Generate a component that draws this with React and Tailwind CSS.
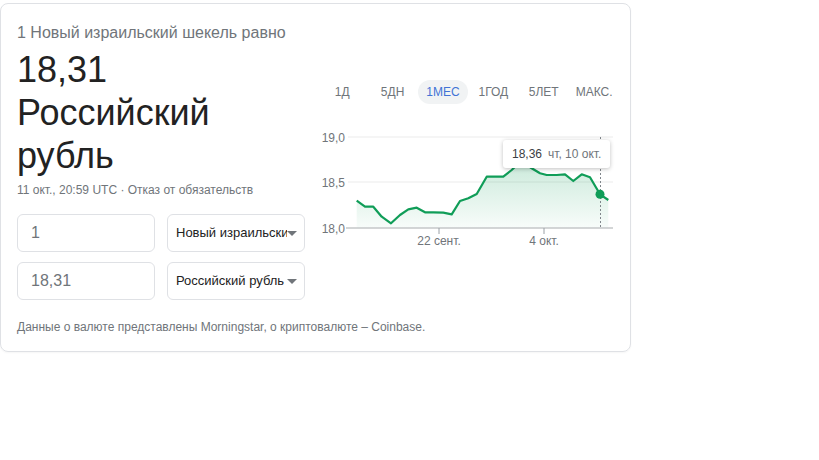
import React from "react";

const pts = [
  [41.7, 75.7], [50, 81.7], [58.3, 81.7], [66.7, 91.7], [76, 98.3], [85, 90],
  [93.3, 84.3], [101.7, 82.7], [110, 87.3], [118.3, 87.3], [128.3, 87.7],
  [136.7, 89.3], [145, 76], [153.3, 73.3], [161.7, 69], [171.7, 51.7],
  [180, 51.7], [188.3, 51.7], [196.7, 45], [206, 36], [216.7, 43.3],
  [225, 48.3], [231.7, 50], [241.7, 50], [250, 49.3], [258.3, 56],
  [266.7, 49.3], [275, 52.3], [285, 69.3], [293.3, 75],
];

const linePath = pts.map((p, i) => `${i ? "L" : "M"}${p[0]},${p[1]}`).join(" ");
const areaPath = `${linePath} L293.3,103 L41.7,103 Z`;

function Chart() {
  return (
    <div className="relative mt-[21px] w-[305px] h-[128px]">
      <svg width="305" height="128" viewBox="0 0 305 128" className="block">
        <defs>
          <linearGradient id="g" x1="0" y1="0" x2="0" y2="1">
            <stop offset="0%" stopColor="#0f9d58" stopOpacity="0.22" />
            <stop offset="100%" stopColor="#0f9d58" stopOpacity="0.03" />
          </linearGradient>
        </defs>
        <line x1="33" y1="12" x2="298" y2="12" stroke="#ebebeb" strokeWidth="1" />
        <line x1="33" y1="57" x2="298" y2="57" stroke="#ebebeb" strokeWidth="1" />
        <g fontFamily="'Liberation Sans', Arial, sans-serif" fontSize="12" fill="#70757a">
          <text x="30" y="17" textAnchor="end">19,0</text>
          <text x="30" y="62" textAnchor="end">18,5</text>
          <text x="30" y="108" textAnchor="end">18,0</text>
          <text x="124" y="120" textAnchor="middle">22 сент.</text>
          <text x="229" y="120" textAnchor="middle">4 окт.</text>
        </g>
        <path d={areaPath} fill="url(#g)" />
        <line x1="31" y1="103" x2="298" y2="103" stroke="#c4c7c9" strokeWidth="1.5" />
        <line x1="124" y1="103" x2="124" y2="109" stroke="#9aa0a6" strokeWidth="1" />
        <line x1="229" y1="103" x2="229" y2="109" stroke="#9aa0a6" strokeWidth="1" />
        <line x1="285.5" y1="12" x2="285.5" y2="103" stroke="#80868b" strokeWidth="1" strokeDasharray="2,2" />
        <path d={linePath} fill="none" stroke="#109d58" strokeWidth="2.2" strokeLinejoin="round" />
        <circle cx="285" cy="69.3" r="4.5" fill="#0f9d58" />
      </svg>
      <div className="absolute left-[188px] top-[15px] w-[107px] h-[28px] bg-white rounded-[3px] shadow-[0_1px_4px_rgba(0,0,0,0.25)] flex items-center pl-[9px] text-[12px] leading-none whitespace-nowrap">
        <span className="text-[#3c4043]">18,36</span>
        <span className="ml-[6px] text-[#70757a]">чт, 10 окт.</span>
      </div>
    </div>
  );
}

function Tabs() {
  const tabs = ["1Д", "5ДН", "1МЕС", "1ГОД", "5ЛЕТ", "МАКС."];
  return (
    <div className="mt-[60px] pl-[2px] flex h-[24px]">
      {tabs.map((t) => (
        <div key={t} className="w-[50.4px] flex justify-center items-center">
          {t === "1МЕС" ? (
            <span className="h-[24px] px-[8px] rounded-full bg-[#f1f3f4] text-[#4273d6] text-[12px] flex items-center">{t}</span>
          ) : (
            <span className="text-[12px] text-[#70757a]">{t}</span>
          )}
        </div>
      ))}
    </div>
  );
}

function Arrow() {
  return (
    <svg width="10" height="5" viewBox="0 0 10 5" className="shrink-0">
      <path d="M0 0 L10 0 L5 5 Z" fill="#70757a" />
    </svg>
  );
}

function Row({ value, label }) {
  return (
    <div className="flex gap-[12px]">
      <div className="w-[138px] h-[38px] border border-[#dfe1e5] rounded-[6px] flex items-center pl-[13px] text-[16px] text-[#70757a]">
        {value}
      </div>
      <div className="w-[138px] h-[38px] border border-[#dfe1e5] rounded-[6px] flex items-center pl-[8px] pr-[6px] text-[13px] text-[#222]">
        <div className="w-[111px] overflow-hidden whitespace-nowrap">{label}</div>
        <Arrow />
      </div>
    </div>
  );
}

export default function App() {
  return (
    <div className="w-[819px] h-[460px] bg-white font-['Liberation_Sans',Arial,sans-serif]">
      <div className="mt-[3px] w-[631px] h-[349px] border border-[#dfe1e5] rounded-[8px] shadow-[0_1px_2px_rgba(0,0,0,0.04)] pl-[16px] pt-[17px] flex flex-col">
        <div className="flex">
          <div className="w-[288px]">
            <div className="text-[16px] leading-[24px] text-[#70757a]">1 Новый израильский шекель равно</div>
            <div className="mt-[3px] text-[36px] leading-[43px] text-[#222]">18,31 Российский рубль</div>
            <div className="mt-[5px] text-[12px] leading-[16px] text-[#70757a]">11 окт., 20:59 UTC · Отказ от обязательств</div>
            <div className="mt-[16px] flex flex-col gap-[10px]">
              <Row value="1" label="Новый израильский шекель" />
              <Row value="18,31" label="Российский рубль" />
            </div>
          </div>
          <div className="ml-[10px] -mt-[1px] w-[305px]">
            <Tabs />
            <Chart />
          </div>
        </div>
        <div className="mt-[19px] text-[12px] leading-[16px] text-[#70757a]">
          Данные о валюте представлены Morningstar, о криптовалюте – Coinbase.
        </div>
      </div>
    </div>
  );
}
